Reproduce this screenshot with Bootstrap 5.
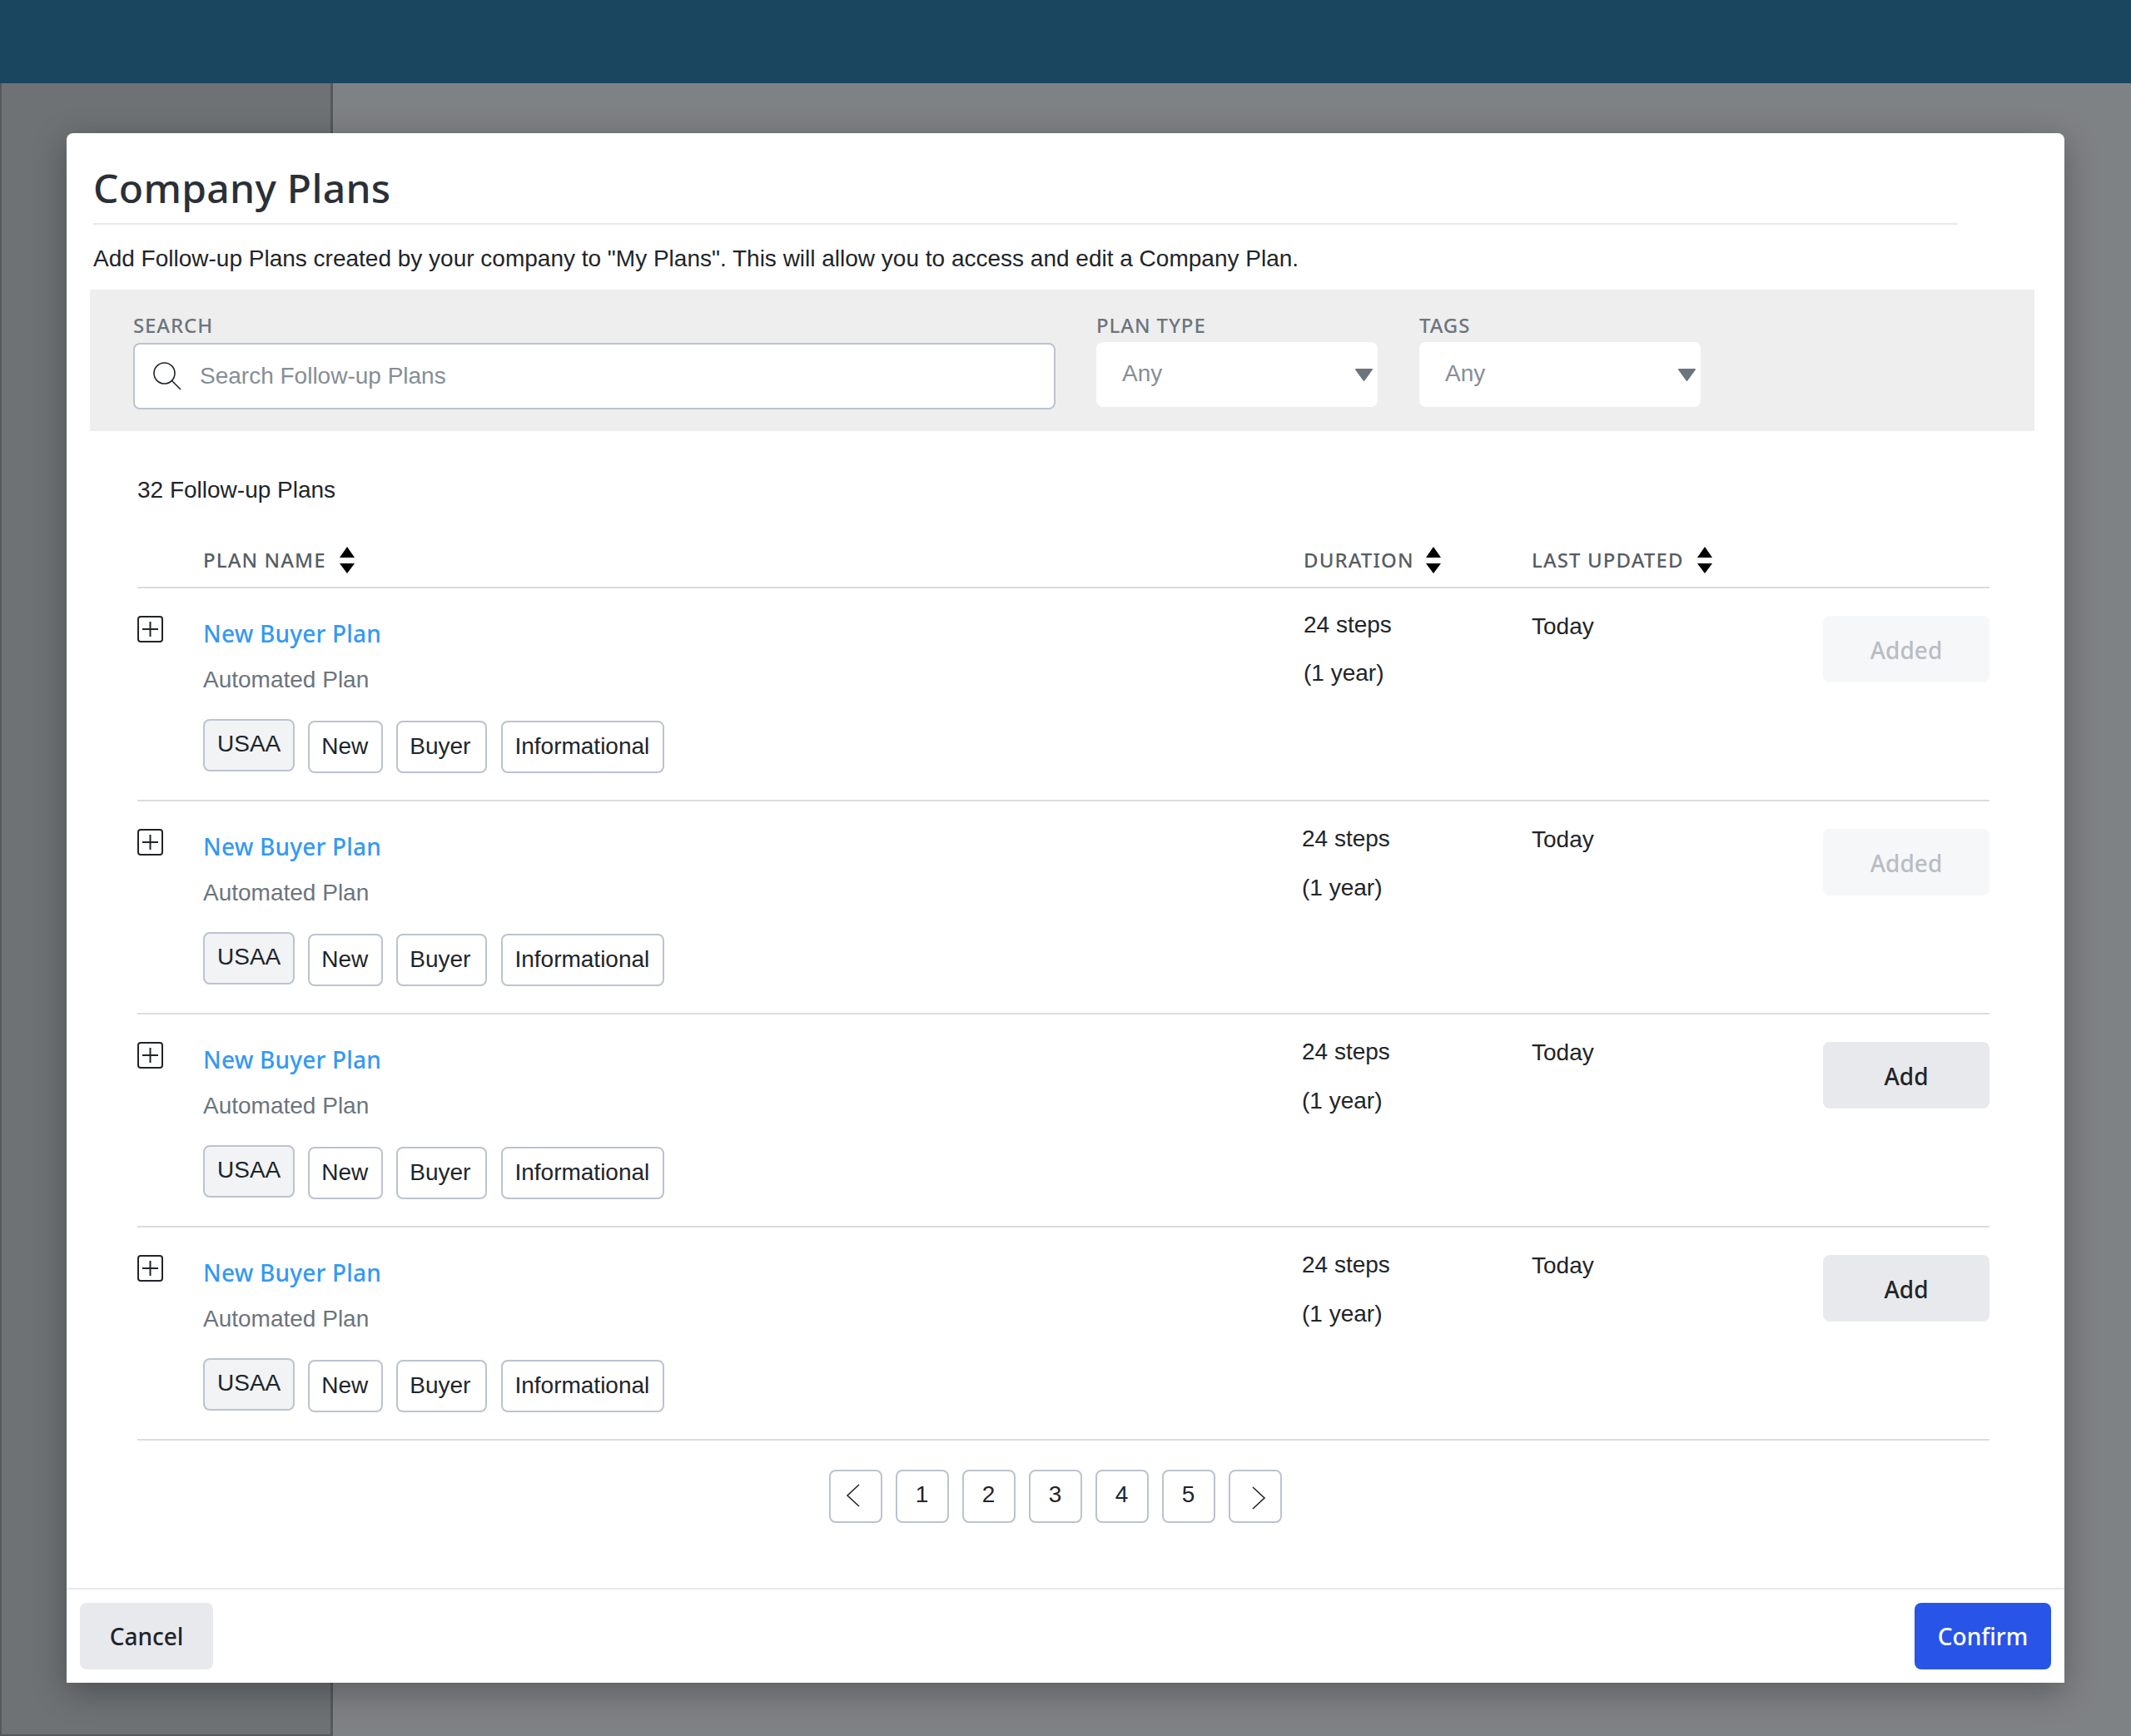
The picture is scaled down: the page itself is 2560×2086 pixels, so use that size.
<!DOCTYPE html>
<html lang="en">
<head>
  <meta charset="UTF-8" />
  <title>Company Plans</title>
  <link href="https://cdn.jsdelivr.net/npm/bootstrap@5.3.2/dist/css/bootstrap.min.css" rel="stylesheet">
  <style>
    body {
      margin: 0;
      width: 2560px;
      height: 2086px;
      overflow: hidden;
      position: relative;
      background-color: #7f8285;
      font-family: "Liberation Sans", Arial, sans-serif;
      font-size: 28px;
      color: #212529;
    }
    .top-strip { height: 100px; background-color: #1a4660; }
    .side-strip {
      width: 400px;
      height: 1986px;
      background-color: #6e7275;
      border-left: 2px solid #55595c;
      border-right: 3px solid #55595c;
      border-bottom: 2px solid #55595c;
    }
    .plans-modal {
      position: absolute;
      left: 80px;
      top: 160px;
      width: 2400px;
      height: 1862px;
      border: 0;
      border-radius: 8px 8px 0 0;
      box-shadow: 0 10px 40px rgba(0, 0, 0, .3);
    }
    .plans-body { padding: 30px 36px 0 28px; flex: 1 1 auto; }
    .plans-title {
      font-family: "Noto Sans", sans-serif;
      font-size: 48px;
      font-weight: 500;
      letter-spacing: .3px;
      line-height: 72px;
      margin: 0 0 0 4px;
      padding-bottom: 6px;
      width: 2240px;
      border-bottom: 2px solid #e8e8ec;
      color: #2b3036;
    }
    .plans-intro { margin: 24px 0 0 4px; line-height: 34px; height: 54px; }
    .filter-band {
      background-color: #eee;
      height: 170px;
      padding: 26px 0 0 52px;
      gap: 49px;
    }
    .filter-label {
      display: block;
      font-family: "Noto Sans", sans-serif;
      font-size: 24px;
      font-weight: 500;
      line-height: 34px;
      letter-spacing: .9px;
      color: #6c757d;
      margin: 0;
    }
    .filter-tags { margin-left: 1px; }
    .search-box {
      width: 1108px;
      height: 80px;
      margin-top: 4px;
      background: #fff;
      border: 2px solid #bcc3cf;
      border-radius: 8px;
      padding-left: 21px;
      gap: 19px;
    }
    .search-box input {
      border: 0;
      outline: 0;
      flex: 1 1 auto;
      font-size: 28px;
      color: #212529;
      background: transparent;
    }
    .search-box input::placeholder { color: #868e96; }
    .any-select {
      width: 338px;
      height: 78px;
      margin-top: 3px;
      border: 0;
      border-radius: 8px;
      padding: 0 0 3px 31px;
      font-family: "Liberation Sans", Arial, sans-serif;
      font-size: 28px;
      color: #868e96;
      background-position: right 6px center;
      background-size: 21px 15px;
      background-image: url("data:image/svg+xml,%3Csvg xmlns='http://www.w3.org/2000/svg' viewBox='0 0 21 15'%3E%3Cpath fill='%236c757d' d='M1 0h19q1.500 0 .7 1.400L11.500 14.300q-1 1.200-2 0L.3 1.400Q-.5 0 1 0z'/%3E%3C/svg%3E");
    }
    .plans-list { margin: 0 54px 0 57px; }
    .plans-count { height: 72px; padding-top: 54px; line-height: 34px; box-sizing: content-box; }
    .list-head {
      height: 63px;
      padding-top: 12px;
      border-bottom: 2px solid #dcdcdf;
      font-family: "Noto Sans", sans-serif;
      font-size: 24px;
      font-weight: 500;
      letter-spacing: 1.1px;
      color: #585d63;
      line-height: 34px;
    }
    .col-gutter { width: 79px; flex: none; }
    .col-gutter svg { display: block; }
    .col-name { width: 1320px; flex: none; }
    .col-length { width: 276px; flex: none; }
    .col-updated { width: 350px; flex: none; }
    .col-action { width: 200px; flex: none; }
    .head-cell { gap: 16px; }
    .head-cell svg { display: block; margin-top: 1px; }
    .head-shift { padding-left: 2px; }
    .head-duration { gap: 14px; }
    .plan-row { height: 256px; padding-top: 33px; border-bottom: 2px solid #dcdcdf; }
    .plan-link {
      display: block;
      font-family: "Noto Sans", sans-serif;
      font-size: 28px;
      font-weight: 500;
      line-height: 42px;
      letter-spacing: .2px;
      color: #3399f3;
      text-decoration: none;
    }
    .plan-kind { color: #6c757d; line-height: 34px; margin-top: 18px; }
    .chip-row { gap: 16px; margin-top: 30px; align-items: flex-start; }
    .plan-chip {
      height: 63px;
      padding: 0 16px 0 14px;
      border: 2px solid #bcc3cf;
      border-radius: 8px;
      line-height: 57px;
      margin-top: 2px;
    }
    .plan-chip:nth-child(3) { padding: 0 18px 0 14px; }
    .plan-chip:nth-child(4) { margin-left: 1px; }
    .plan-chip-on { background: #f1f3f5; margin-top: 0; line-height: 55px; padding: 0 15px; }
    .steps-line { line-height: 34px; height: 59px; margin-top: -5px; }
    .steps-first { height: 58px; margin-top: -6px; }
    .year-line { line-height: 34px; }
    .today-line { line-height: 34px; margin-top: -4px; }
    .action-btn {
      width: 200px;
      height: 80px;
      padding-top: 8px;
      border: 0;
      border-radius: 8px;
      font-family: "Noto Sans", sans-serif;
      font-size: 28px;
      font-weight: 500;
      background-color: #e8e9ed;
      color: #212529;
      --bs-btn-disabled-opacity: 1;
    }
    .action-btn:disabled { background-color: #f6f7f9; color: #b9bdc2; }
    .pager { gap: 16px; margin: 35px 20px 0 0; }
    .pager-btn {
      width: 64px;
      height: 64px;
      padding: 0 0 4px;
      border: 2px solid #bcc3cf;
      border-radius: 8px;
      background: #fff;
      font-size: 28px;
      color: #212529;
    }
    .pager-btn svg { display: block; margin: 0 auto; }
    .plans-foot {
      height: 114px;
      padding: 16px;
      border-top: 2px solid #e8e8ee;
    }
    .foot-btn {
      height: 80px;
      border: 0;
      border-radius: 8px;
      font-family: "Noto Sans", sans-serif;
      font-size: 28px;
      font-weight: 500;
    }
    .foot-cancel { width: 160px; background-color: #e8e9ed; color: #212529; }
    .foot-confirm { width: 164px; background-color: #2855e8; color: #fff; }
  </style>
</head>
<body>
  <div class="top-strip"></div>
  <div class="side-strip"></div>

  <div class="modal-content plans-modal d-flex flex-column bg-white">
    <div class="plans-body">
      <h1 class="plans-title">Company Plans</h1>
      <p class="plans-intro">Add Follow-up Plans created by your company to "My Plans". This will allow you to access and edit a Company Plan.</p>

      <div class="filter-band d-flex">
        <div>
          <label class="filter-label" for="plan-search">SEARCH</label>
          <div class="search-box d-flex align-items-center">
            <svg width="36" height="36" viewBox="0 0 36 36" fill="none" stroke="#212529" stroke-width="1.600">
              <circle cx="14.500" cy="14.500" r="12.500"/>
              <path d="M23.500 23.500 34 34"/>
            </svg>
            <input id="plan-search" type="text" placeholder="Search Follow-up Plans">
          </div>
        </div>
        <div>
          <label class="filter-label" for="plan-type">PLAN TYPE</label>
          <select id="plan-type" class="form-select any-select"><option>Any</option></select>
        </div>
        <div class="filter-tags">
          <label class="filter-label" for="plan-tags">TAGS</label>
          <select id="plan-tags" class="form-select any-select"><option>Any</option></select>
        </div>
      </div>

      <div class="plans-list">
        <div class="plans-count">32 Follow-up Plans</div>
        <div id="plan-head" class="list-head d-flex">
          <div class="col-gutter"></div>
          <div class="col-name d-flex head-cell align-items-start">PLAN NAME <span class="sort-slot"></span></div>
          <div class="col-length d-flex head-cell head-duration align-items-start head-shift">DURATION <span class="sort-slot"></span></div>
          <div class="col-updated d-flex head-cell align-items-start">LAST UPDATED <span class="sort-slot"></span></div>
        </div>
        <div id="plan-rows"></div>
        <div class="pager d-flex justify-content-center">
          <button class="pager-btn" aria-label="Previous">
            <svg width="40" height="40" viewBox="0 0 40 40" fill="none" stroke="#212529" stroke-width="1.600"><path d="M24 8 10 21 24 34"/></svg>
          </button>
          <button class="pager-btn">1</button>
          <button class="pager-btn">2</button>
          <button class="pager-btn">3</button>
          <button class="pager-btn">4</button>
          <button class="pager-btn">5</button>
          <button class="pager-btn" aria-label="Next">
            <svg width="40" height="40" viewBox="0 0 40 40" fill="none" stroke="#212529" stroke-width="1.600"><path d="M17 11 31 24 17 37"/></svg>
          </button>
        </div>
      </div>
    </div>

    <div class="plans-foot d-flex justify-content-between">
      <button class="btn foot-btn foot-cancel">Cancel</button>
      <button class="btn foot-btn foot-confirm">Confirm</button>
    </div>
  </div>

  <script>
    const sortIcon = '<svg width="18" height="32" viewBox="0 0 18 32" fill="#000"><path d="M9 0 18 13H0z"/><path d="M0 20h18L9 32z"/></svg>';
    document.querySelectorAll(".sort-slot").forEach(el => { el.innerHTML = sortIcon; });

    const plusIcon = '<svg width="31" height="32" viewBox="0 0 31 32" fill="none" stroke="#212529" stroke-width="2"><rect x="1" y="1" width="29" height="30" rx="3"/><path d="M15.500 7v18M6 16h19"/></svg>';
    const plans = [
      { added: true, first: true },
      { added: true, first: false },
      { added: false, first: false },
      { added: false, first: false }
    ];

    const rows = document.getElementById("plan-rows");
    plans.forEach(plan => {
      const row = document.createElement("div");
      row.className = "plan-row d-flex";
      row.innerHTML = `
        <div class="col-gutter">${plusIcon}</div>
        <div class="col-name">
          <a class="plan-link" href="#">New Buyer Plan</a>
          <div class="plan-kind">Automated Plan</div>
          <div class="chip-row d-flex">
            <span class="plan-chip plan-chip-on">USAA</span>
            <span class="plan-chip">New</span>
            <span class="plan-chip">Buyer</span>
            <span class="plan-chip">Informational</span>
          </div>
        </div>
        <div class="col-length ${plan.first ? "head-shift" : ""}">
          <div class="steps-line ${plan.first ? "steps-first" : ""}">24 steps</div>
          <div class="year-line">(1 year)</div>
        </div>
        <div class="col-updated"><div class="today-line">Today</div></div>
        <div class="col-action">
          <button class="btn action-btn" ${plan.added ? "disabled" : ""}>${plan.added ? "Added" : "Add"}</button>
        </div>`;
      rows.appendChild(row);
    });
  </script>
  <script src="https://cdn.jsdelivr.net/npm/bootstrap@5.3.2/dist/js/bootstrap.bundle.min.js"></script>
</body>
</html>
